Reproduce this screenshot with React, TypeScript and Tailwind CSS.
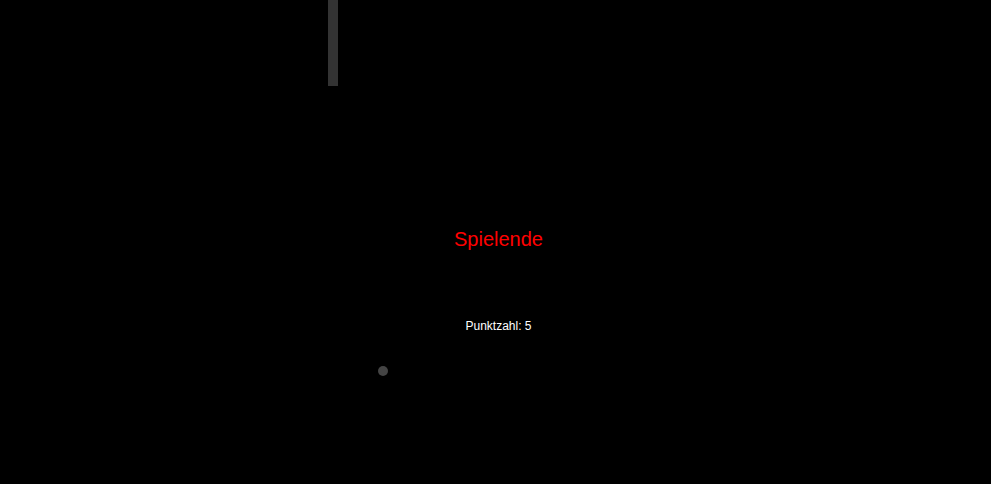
export default function App() {
    return (
        <div
            className="relative w-[991px] h-[484px] bg-black overflow-hidden"
            style={{ fontFamily: '"Liberation Sans", Arial, sans-serif' }}
        >
            {/* paddle */}
            <div className="absolute left-[328px] top-0 w-[10px] h-[86px] bg-[#333333]" />
            {/* ball */}
            <div className="absolute left-[378px] top-[366px] w-[10px] h-[10px] rounded-full bg-[#444444]" />

            <div className="flex flex-col items-center pt-[228px] pl-[6px]">
                <h1 className="text-[20px] leading-[23px] text-[#ff0000]">Spielende</h1>
                <p className="mt-[68px] text-[12px] leading-[14px] text-white">Punktzahl: 5</p>
            </div>
        </div>
    );
}
